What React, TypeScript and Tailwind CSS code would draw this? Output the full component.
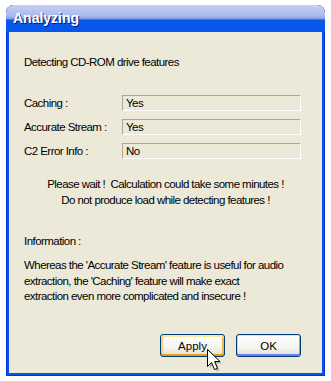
import React from "react";

const font = { fontFamily: '"Liberation Sans", Arial, sans-serif' };

function Field({ label, value }: { label: string; value: string }) {
  return (
    <div className="flex h-[16px] items-center">
      <div className="w-[98px] shrink-0">{label}</div>
      <div className="flex h-[16px] w-[180px] items-center border border-t-[#aca899] border-l-[#aca899] border-b-white border-r-white pl-[3px]">
        {value}
      </div>
    </div>
  );
}

function Cursor() {
  return (
    <svg
      className="absolute left-[206px] top-[348px]"
      width="18"
      height="26"
      viewBox="0 0 18 26"
    >
      <path
        d="M1.5 1.5 L1.5 18.5 L5.5 14.5 L8.5 21.5 L11.5 20.3 L8.6 13.5 L14 13.5 Z"
        fill="#000"
        opacity="0.22"
        transform="translate(2 2)"
      />
      <path
        d="M1.5 1.5 L1.5 18.5 L5.5 14.5 L8.5 21.5 L11.5 20.3 L8.6 13.5 L14 13.5 Z"
        fill="#fff"
        stroke="#000"
        strokeWidth="1"
      />
    </svg>
  );
}

export default function App() {
  return (
    <div className="relative h-[381px] w-[331px] bg-white" style={font}>
      <div className="absolute left-[6px] top-[5px] flex h-[371px] w-[319px] flex-col overflow-hidden rounded-t-[8px] bg-[#0553e8] shadow-[inset_0_0_0_1px_#0831d9]">
        <div className="flex h-[27px] shrink-0 items-center bg-[linear-gradient(to_bottom,#c8d0f3_0%,#aab9ee_40%,#8aa0e6_50%,#0a5ae9_56%,#0456ec_100%)] pl-[7px]">
          <span className="text-[14px] font-bold text-white [text-shadow:1px_1px_0_#0a1a70]">
            Analyzing
          </span>
        </div>
        <div className="mx-[3px] mb-[3px] flex flex-1 flex-col whitespace-nowrap bg-[#ece9d8] pl-[15px] pr-[21px] text-[11.5px] leading-[16px] tracking-[-0.55px] text-black">
          <div className="mt-[22px]">Detecting CD-ROM drive features</div>
          <div className="mt-[25px] flex flex-col gap-[8px]">
            <Field label="Caching :" value="Yes" />
            <Field label="Accurate Stream :" value="Yes" />
            <Field label="C2 Error Info :" value="No" />
          </div>
          <div className="-ml-[15px] -mr-[21px] mt-[17px] text-center whitespace-pre">
            <div>Please wait !  Calculation could take some minutes !</div>
            <div>Do not produce load while detecting features !</div>
          </div>
          <div className="mt-[25px]">Information :</div>
          <div className="mt-[9px] leading-[15.5px]">
            Whereas the 'Accurate Stream' feature is useful for audio
            <br />
            extraction, the 'Caching' feature will make exact
            <br />
            extraction even more complicated and insecure !
          </div>
          <div className="mt-auto mb-[16px] flex justify-end gap-[11px] tracking-normal">
            <button
              type="button"
              className="h-[23px] w-[65px] rounded-[3px] border border-[#003c74] bg-[linear-gradient(to_bottom,#ffffff_0%,#f5f4ef_60%,#e6e3d6_90%,#d6d0c5_100%)] shadow-[inset_0_2px_0_#ffe7a2,inset_0_-2px_0_#e5a01a,inset_2px_0_0_#fbd27c,inset_-2px_0_0_#f4b848]"
            >
              Apply
            </button>
            <button
              type="button"
              className="h-[23px] w-[65px] rounded-[3px] border border-[#003c74] bg-[linear-gradient(to_bottom,#ffffff_0%,#f5f4ef_60%,#e6e3d6_90%,#d6d0c5_100%)] shadow-[inset_0_1px_0_#cee7ff,inset_0_-2px_0_#6982ee,inset_1px_0_0_#bcd4f6,inset_-1px_0_0_#89ade4]"
            >
              OK
            </button>
          </div>
        </div>
      </div>
      <Cursor />
    </div>
  );
}
